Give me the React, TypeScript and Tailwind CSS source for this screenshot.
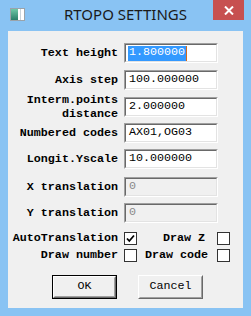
import React from 'react'

const mono = { fontFamily: '"Liberation Mono", "Courier New", monospace' }

const Field = ({ value, disabled, selected }: { value: string; disabled?: boolean; selected?: boolean }) => {
  return (
    <div
      className={`w-[94px] h-[20px] border-t-[#a0a0a0] border-l-[#a0a0a0] border-b-white border-r-white border relative ${disabled ? 'bg-[#f0f0f0]' : 'bg-white'}`}
    >
      <div className="absolute inset-0 border-t border-l border-t-[#696969] border-l-[#696969] border-b border-r border-b-[#e3e3e3] border-r-[#e3e3e3]" />
      <div className="absolute inset-0 flex items-center pl-[3px] text-[11.7px] leading-none" style={mono}>
        {selected ? (
          <>
            <span className="bg-[#3399ff] text-white h-[15px] flex items-center px-[1px]">{value}</span>
            <span className="w-[1px] h-[15px] bg-[#d2691e]" />
          </>
        ) : (
          <span className={`px-[1px] ${disabled ? 'text-[#8a8a8a]' : 'text-black'}`}>{value}</span>
        )}
      </div>
    </div>
  )
}

const Checkbox = ({ checked }: { checked?: boolean }) => {
  return (
    <div className="w-[13px] h-[13px] border border-[#333333] bg-white flex items-center justify-center shrink-0">
      {checked && (
        <svg width="9" height="9" viewBox="0 0 9 9">
          <path d="M1 4.5 L3.3 7 L8 1.5" fill="none" stroke="#000" strokeWidth="1.8" />
        </svg>
      )}
    </div>
  )
}

const FieldRow = ({ label, value, disabled, selected, className }: { label: React.ReactNode; value: string; disabled?: boolean; selected?: boolean; className?: string }) => {
  return (
    <div className={`flex items-center h-[20px] ${className ?? ''}`}>
      <div className="w-[110px] text-right font-bold text-[11.7px] leading-[14px] text-black" style={mono}>
        {label}
      </div>
      <div className="ml-[6px]">
        <Field value={value} disabled={disabled} selected={selected} />
      </div>
    </div>
  )
}

const Button = ({ label, primary }: { label: string; primary?: boolean }) => {
  return (
    <div className={`w-[65px] h-[24px] bg-[#f0f0f0] ${primary ? 'border border-[#000]' : ''}`}>
      <div className="w-full h-full border border-t-white border-l-white border-b-[#696969] border-r-[#696969]">
        <div className="w-full h-full border border-t-[#f0f0f0] border-l-[#f0f0f0] border-b-[#a0a0a0] border-r-[#a0a0a0] flex items-center justify-center text-[11.7px] text-black" style={mono}>
          {label}
        </div>
      </div>
    </div>
  )
}

export default function App() {
  return (
    <div className="w-[251px] h-[316px] bg-[#89c3f3] flex flex-col">
      <div className="h-[31px] relative flex items-center justify-center">
        <div className="absolute left-[10px] top-[8px] w-[15px] h-[13px] border border-[#9aa3aa] bg-white flex">
          <div className="w-[7px] h-full bg-gradient-to-b from-[#6fc9a8] to-[#2a7f6a]" />
          <div className="w-[1px] h-full bg-[#c9d3da] ml-[2px]" />
        </div>
        <span className="text-[15px] text-[#1a1a1a] mt-[-2px]" style={{ fontFamily: '"Noto Sans", "Open Sans", sans-serif' }}>
          RTOPO SETTINGS
        </span>
        <div className="absolute right-[7px] top-0 w-[31px] h-[20px] bg-[#c75050] flex items-center justify-center">
          <svg width="10" height="9" viewBox="0 0 10 9">
            <path d="M1 0.5 L9 8.5 M9 0.5 L1 8.5" stroke="#fff" strokeWidth="2" />
          </svg>
        </div>
      </div>
      <div className="mx-[8px] h-[277px] bg-[#f0f0f0] flex flex-col">
        <FieldRow className="mt-[12px]" label="Text height" value="1.800000" selected />
        <FieldRow className="mt-[7px]" label="Axis step" value="100.000000" />
        <FieldRow className="mt-[7px]" label={<><div>Interm.points</div><div>distance</div></>} value="2.000000" />
        <FieldRow className="mt-[6px]" label="Numbered codes" value="AX01,OG03" />
        <FieldRow className="mt-[6px]" label="Longit.Yscale" value="10.000000" />
        <FieldRow className="mt-[8px]" label="X translation" value="0" disabled />
        <FieldRow className="mt-[6px]" label="Y translation" value="0" disabled />

        <div className="flex items-center mt-[9px] h-[13px] font-bold text-[11.7px] text-black" style={mono}>
          <div className="w-[110px] text-right">AutoTranslation</div>
          <div className="ml-[6px]"><Checkbox checked /></div>
          <div className="w-[68px] text-right">Draw Z</div>
          <div className="ml-[12px]"><Checkbox /></div>
        </div>
        <div className="flex items-center mt-[4px] h-[13px] font-bold text-[11.7px] text-black" style={mono}>
          <div className="w-[110px] text-right">Draw number</div>
          <div className="ml-[6px]"><Checkbox /></div>
          <div className="w-[71px] text-right">Draw code</div>
          <div className="ml-[9px]"><Checkbox /></div>
        </div>

        <div className="flex mt-[13px] pl-[44px] gap-[21px]">
          <Button label="OK" primary />
          <Button label="Cancel" />
        </div>
      </div>
    </div>
  )
}
